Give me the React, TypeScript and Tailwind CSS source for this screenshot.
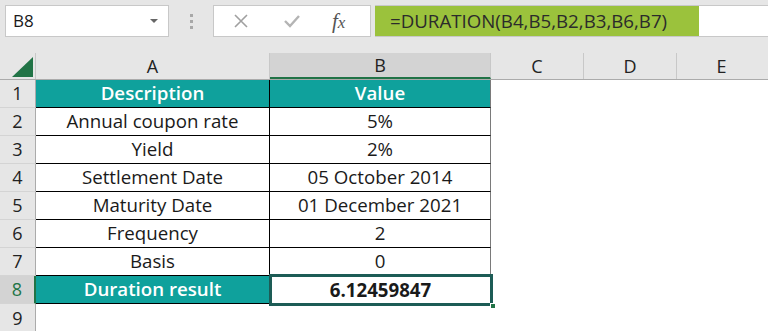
import React from "react"

const rows = [
  { desc: "Description", value: "Value", head: true },
  { desc: "Annual coupon rate", value: "5%" },
  { desc: "Yield", value: "2%" },
  { desc: "Settlement Date", value: "05 October 2014" },
  { desc: "Maturity Date", value: "01 December 2021" },
  { desc: "Frequency", value: "2" },
  { desc: "Basis", value: "0" },
  { desc: "Duration result", value: "6.12459847", result: true },
]

const font = { fontFamily: '"Open Sans", "Liberation Sans", sans-serif' }

export default function App() {
  return (
    <div className="w-[768px] h-[331px] overflow-hidden bg-white text-[#1a1a1a]" style={font}>
      {/* Formula bar */}
      <div className="h-[53px] bg-[#e6e6e6] flex items-start pt-[5px] pl-[5px]">
        <div className="w-[164px] h-[32px] bg-white border border-[#c8c8c8] flex items-center justify-between pl-[7px] pr-[10px]">
          <span className="text-[17px]">B8</span>
          <span className="w-0 h-0 border-l-[4px] border-r-[4px] border-t-[4px] border-l-transparent border-r-transparent border-t-[#666]" />
        </div>
        <div className="w-[44px] h-[32px] flex flex-col items-center justify-center gap-[3px]">
          <span className="w-[3px] h-[3px] bg-[#a8a8a8]" />
          <span className="w-[3px] h-[3px] bg-[#a8a8a8]" />
          <span className="w-[3px] h-[3px] bg-[#a8a8a8]" />
        </div>
        <div className="w-[158px] h-[32px] bg-white border border-[#c8c8c8] flex items-center">
          <svg className="ml-[19px]" width="16" height="16" viewBox="0 0 16 16">
            <path d="M2 2L14 14M14 2L2 14" stroke="#a0a0a0" strokeWidth="1.6" fill="none" />
          </svg>
          <svg className="ml-[34px]" width="18" height="16" viewBox="0 0 18 16">
            <path d="M2 8L7 13L16 3" stroke="#b4b4b4" strokeWidth="2.4" fill="none" />
          </svg>
          <span className="ml-[31px] italic text-[#555] text-[21px] leading-none" style={{ fontFamily: '"Liberation Serif", serif' }}>
            f<span className="text-[17px]">x</span>
          </span>
        </div>
        <div className="ml-[4px] flex-1 h-[32px] bg-white border-t border-b border-[#c8c8c8] flex">
          <div className="w-[324px] h-full bg-[#9bc23c] flex items-center pl-[15px] text-[18.7px] text-[#2b2b2b]">
            =DURATION(B4,B5,B2,B3,B6,B7)
          </div>
        </div>
      </div>

      {/* Column headers */}
      <div className="flex h-[27px] bg-[#e6e6e6] border-b border-[#ababab] text-[18px] text-[#222]">
        <div className="w-[36px] h-full border-r border-[#c8c8c8] relative">
          <svg className="absolute left-[12px] top-[4px]" width="22" height="21" viewBox="0 0 22 21">
            <path d="M21 0V20H0Z" fill="#217346" />
          </svg>
        </div>
        <div className="w-[234px] h-full border-r border-[#c8c8c8] flex items-center justify-center">A</div>
        <div className="w-[221px] h-full bg-[#d3d3d3] border-r border-[#c8c8c8] border-b-2 border-b-[#217346] flex items-center justify-center">B</div>
        <div className="w-[93px] h-full border-r border-[#c8c8c8] flex items-center justify-center">C</div>
        <div className="w-[93px] h-full border-r border-[#c8c8c8] flex items-center justify-center">D</div>
        <div className="flex-1 h-full flex items-center justify-center pr-[2px]">E</div>
      </div>

      {/* Rows */}
      {rows.map((r, i) => {
        const teal = r.head || r.result
        return (
          <div key={i} className="flex h-[28px] text-[18.7px]">
            <div
              className={`w-[36px] h-full border-b border-[#d4d4d4] flex items-center justify-center text-[18px] ${
                r.result ? "bg-[#d3d3d3] border-r-2 border-r-[#217346] text-[#217346]" : "bg-[#e6e6e6] border-r border-r-[#ababab] text-[#222]"
              }`}
            >
              {i + 1}
            </div>
            <div
              className={`w-[234px] h-full border-b border-r border-black flex items-center justify-center ${
                teal ? "bg-[#0fa19c] text-white font-semibold" : "bg-white"
              }`}
            >
              {r.desc}
            </div>
            <div
              className={`w-[221px] h-full flex items-center justify-center relative ${
                r.head ? "bg-[#0fa19c] text-white font-semibold" : "bg-white"
              } ${r.result ? "font-bold" : "border-b border-black border-r border-r-[#7a7a7a]"}`}
            >
              {r.value}
              {r.result && (
                <>
                  <span className="absolute left-[-1px] top-[-2px] right-[-2px] bottom-[-2px] border-[3px] border-[#1d5c56]" />
                  <span className="absolute right-[-5px] bottom-[-5px] w-[6px] h-[6px] bg-[#217346] border border-white" />
                </>
              )}
            </div>
            <div className="flex-1 h-full bg-white" />
          </div>
        )
      })}
      <div className="flex h-[28px] text-[18px]">
        <div className="w-[36px] h-full bg-[#e6e6e6] border-r border-[#ababab] flex items-center justify-center text-[#222]">9</div>
        <div className="flex-1 bg-white" />
      </div>
    </div>
  )
}
